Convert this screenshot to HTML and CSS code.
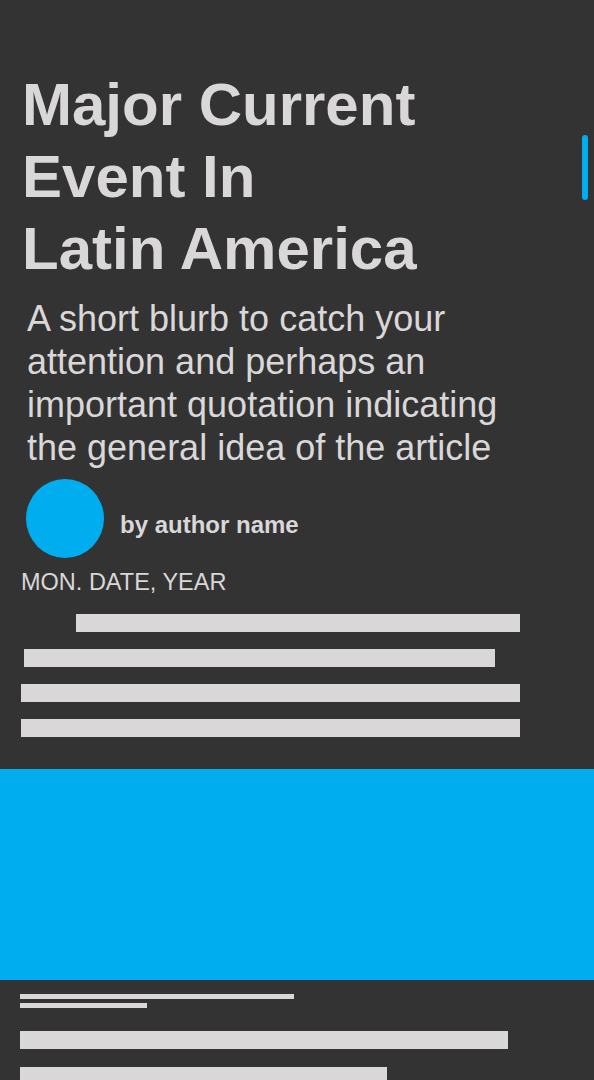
FILE: index.html
```html
<!DOCTYPE html>
<html lang="en">
<head>
<meta charset="utf-8">
<title>Major Current Event In Latin America</title>
<link rel="stylesheet" href="styles.css">
</head>
<body>
<main class="page">
  <div class="scroll-indicator"></div>
  <header class="hero">
    <h1 class="title">Major Current<br>Event In<br>Latin America</h1>
    <p class="blurb">A short blurb to catch your attention and perhaps an important quotation indicating the general idea of the article</p>
    <div class="byline">
      <div class="avatar"></div>
      <span class="author">by author name</span>
    </div>
    <div class="date">MON. DATE, YEAR</div>
  </header>
  <section class="lines">
    <div class="line line-indent"></div>
    <div class="line line-short"></div>
    <div class="line line-full"></div>
    <div class="line line-full"></div>
  </section>
  <div class="feature"></div>
  <section class="caption">
    <div class="thin thin-long"></div>
    <div class="thin thin-short"></div>
  </section>
  <section class="lines-bottom">
    <div class="line line-b1"></div>
    <div class="line line-b2"></div>
  </section>
</main>
</body>
</html>
```

FILE: styles.css
```css
html, body {
  margin: 0;
  padding: 0;
  background: #333333;
}
body {
  font-family: "Liberation Sans", Arial, Helvetica, sans-serif;
  color: #d9d7d8;
  overflow: hidden;
}
.page {
  position: relative;
  width: 594px;
  height: 1080px;
  overflow: hidden;
}
.scroll-indicator {
  position: absolute;
  left: 582px;
  top: 135px;
  width: 6px;
  height: 65px;
  border-radius: 3px;
  background: #00aeef;
}
.hero {
  display: flex;
  flex-direction: column;
  padding-top: 69px;
}
.title {
  margin: 0 0 0 22px;
  font-size: 60px;
  line-height: 72px;
  font-weight: 700;
}
.blurb {
  margin: 12px 0 0 27px;
  font-size: 36px;
  line-height: 43px;
  font-weight: 400;
  width: 500px;
}
.byline {
  display: flex;
  align-items: flex-start;
  gap: 16px;
  margin: 10px 0 0 26px;
}
.avatar {
  width: 78px;
  height: 79px;
  border-radius: 50%;
  background: #00aeef;
}
.author {
  padding-top: 32px;
  font-size: 24px;
  line-height: 28px;
  font-weight: 700;
}
.date {
  margin: 10px 0 0 21px;
  font-size: 23.5px;
  line-height: 28px;
}
.lines {
  display: flex;
  flex-direction: column;
  gap: 17px;
  margin-top: 18px;
}
.line {
  height: 18px;
  background: #d9d7d8;
}
.line-indent { margin-left: 76px; width: 444px; }
.line-short { margin-left: 24px; width: 471px; }
.line-full { margin-left: 21px; width: 499px; }
.feature {
  margin-top: 32px;
  height: 211px;
  background: #00aeef;
}
.caption {
  display: flex;
  flex-direction: column;
  gap: 4px;
  margin: 14px 0 0 20px;
}
.thin {
  height: 5px;
  background: #d9d7d8;
}
.thin-long { width: 274px; }
.thin-short { width: 127px; }
.lines-bottom {
  display: flex;
  flex-direction: column;
  gap: 18px;
  margin: 23px 0 0 20px;
}
.line-b1 { width: 488px; }
.line-b2 { width: 367px; height: 30px; }
```
